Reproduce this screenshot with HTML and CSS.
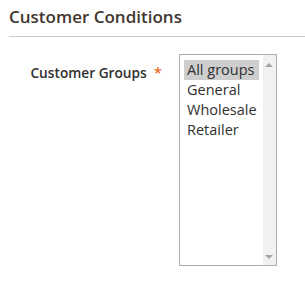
FILE: index.html
```html
<!DOCTYPE html>
<html lang="en">
  <head>
    <meta charset="UTF-8">
    <title>Customer Conditions</title>
    <link rel="stylesheet" href="styles.css">
  </head>
  <body>
    <div class="fieldset">
      <div class="fieldset-title">
        <h2>Customer Conditions</h2>
      </div>
      <div class="field">
        <label class="field-label" for="groups">
          <span>Customer Groups</span>
          <span class="required">*</span>
        </label>
        <div class="listbox" id="groups">
          <ul class="options">
            <li class="selected">All groups</li>
            <li>General</li>
            <li>Wholesale</li>
            <li>Retailer</li>
          </ul>
          <div class="scrollbar">
            <span class="arrow up"></span>
            <span class="arrow down"></span>
          </div>
        </div>
      </div>
    </div>
  </body>
</html>
```

FILE: styles.css
```css
html, body {
  margin: 0;
  padding: 0;
  background: #ffffff;
  font-family: "Open Sans", Arial, sans-serif;
  color: #303030;
}

.fieldset-title {
  margin-left: 9px;
  padding: 6px 0 9px;
  border-bottom: 1px solid #cccccc;
}

.fieldset-title h2 {
  margin: 0;
  font-size: 17px;
  font-weight: 600;
  line-height: 21px;
  color: #41362f;
}

.field {
  display: flex;
  align-items: flex-start;
  padding-top: 17px;
}

.field-label {
  width: 162px;
  display: flex;
  justify-content: flex-end;
  gap: 7px;
  padding-top: 9px;
  font-size: 13.7px;
  font-weight: 600;
  line-height: 19px;
  color: #303030;
}

.required {
  color: #eb5202;
  font-weight: 400;
  font-size: 15px;
}

.listbox {
  margin-left: 17px;
  width: 96px;
  height: 210px;
  border: 1px solid #adadad;
  display: flex;
}

.options {
  flex: 1;
  list-style: none;
  margin: 0;
  padding: 5px 4px 0 4px;
  font-size: 14.5px;
  line-height: 20px;
}

.options li {
  padding: 0 2px 0 3px;
}

.options li.selected {
  background: #cecece;
}

.scrollbar {
  width: 15px;
  background: #f1f1f1;
  display: flex;
  flex-direction: column;
  justify-content: space-between;
  align-items: center;
  padding: 8px 0 6px;
}

.arrow {
  width: 0;
  height: 0;
  border-left: 4px solid transparent;
  border-right: 4px solid transparent;
}

.arrow.up {
  border-bottom: 4px solid #a3a3a3;
}

.arrow.down {
  border-top: 4px solid #a3a3a3;
}
```
